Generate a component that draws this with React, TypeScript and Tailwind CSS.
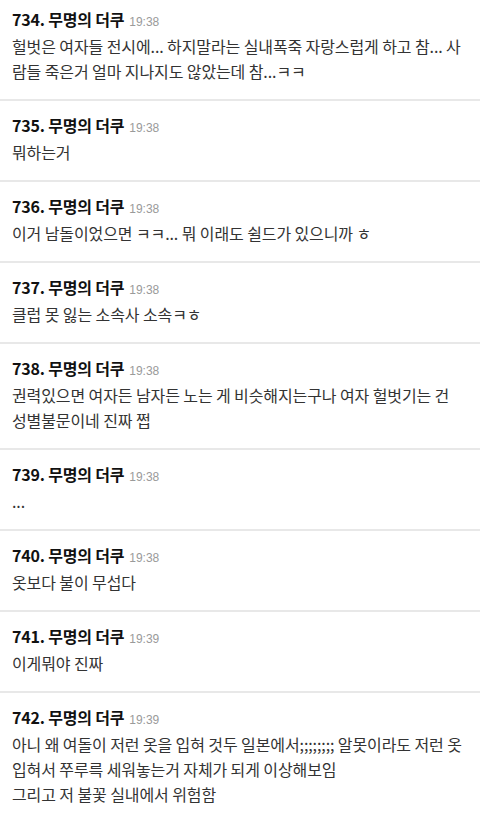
import React from "react";

type Comment = {
  no: number;
  time: string;
  lines: string[];
};

const comments: Comment[] = [
  {
    no: 734,
    time: "19:38",
    lines: [
      "헐벗은 여자들 전시에... 하지말라는 실내폭죽 자랑스럽게 하고 참... 사",
      "람들 죽은거 얼마 지나지도 않았는데 참...ㅋㅋ",
    ],
  },
  { no: 735, time: "19:38", lines: ["뭐하는거"] },
  {
    no: 736,
    time: "19:38",
    lines: ["이거 남돌이었으면 ㅋㅋ... 뭐 이래도 쉴드가 있으니까 ㅎ"],
  },
  { no: 737, time: "19:38", lines: ["클럽 못 잃는 소속사 소속ㅋㅎ"] },
  {
    no: 738,
    time: "19:38",
    lines: [
      "권력있으면 여자든 남자든 노는 게 비슷해지는구나 여자 헐벗기는 건",
      "성별불문이네 진짜 쩝",
    ],
  },
  { no: 739, time: "19:38", lines: ["..."] },
  { no: 740, time: "19:38", lines: ["옷보다 불이 무섭다"] },
  { no: 741, time: "19:39", lines: ["이게뭐야 진짜"] },
  {
    no: 742,
    time: "19:39",
    lines: [
      "아니 왜 여돌이 저런 옷을 입혀 것두 일본에서;;;;;;;; 알못이라도 저런 옷",
      "입혀서 쭈루륵 세워놓는거 자체가 되게 이상해보임",
      "그리고 저 불꽃 실내에서 위험함",
    ],
  },
];

const font = { fontFamily: '"Noto Sans CJK KR", "Noto Sans", sans-serif' };

function CommentItem({ item }: { item: Comment }) {
  return (
    <li className="border-b-2 border-[#e8e8e8] px-3 pt-[13px] pb-[15px]">
      <div className="flex items-baseline gap-[5px] h-[22px] leading-[22px]">
        <span className="text-[16px] font-bold text-[#111] tracking-[-0.2px]">
          {item.no}. 무명의 더쿠
        </span>
        <span
          className="text-[12px] text-[#9a9a9a]"
          style={{ fontFamily: '"Liberation Sans", Arial, sans-serif' }}
        >
          {item.time}
        </span>
      </div>
      <div className="mt-[4px] text-[16px] text-[#333] tracking-[-0.1px]">
        {item.lines.map((line, i) => (
          <p key={i} className="whitespace-nowrap leading-[25px]">
            {line}
          </p>
        ))}
      </div>
    </li>
  );
}

export default function App() {
  return (
    <div className="w-[480px] h-[821px] overflow-hidden bg-white" style={font}>
      <ul className="-mt-[5px]">
        {comments.map((c) => (
          <CommentItem key={c.no} item={c} />
        ))}
      </ul>
    </div>
  );
}
